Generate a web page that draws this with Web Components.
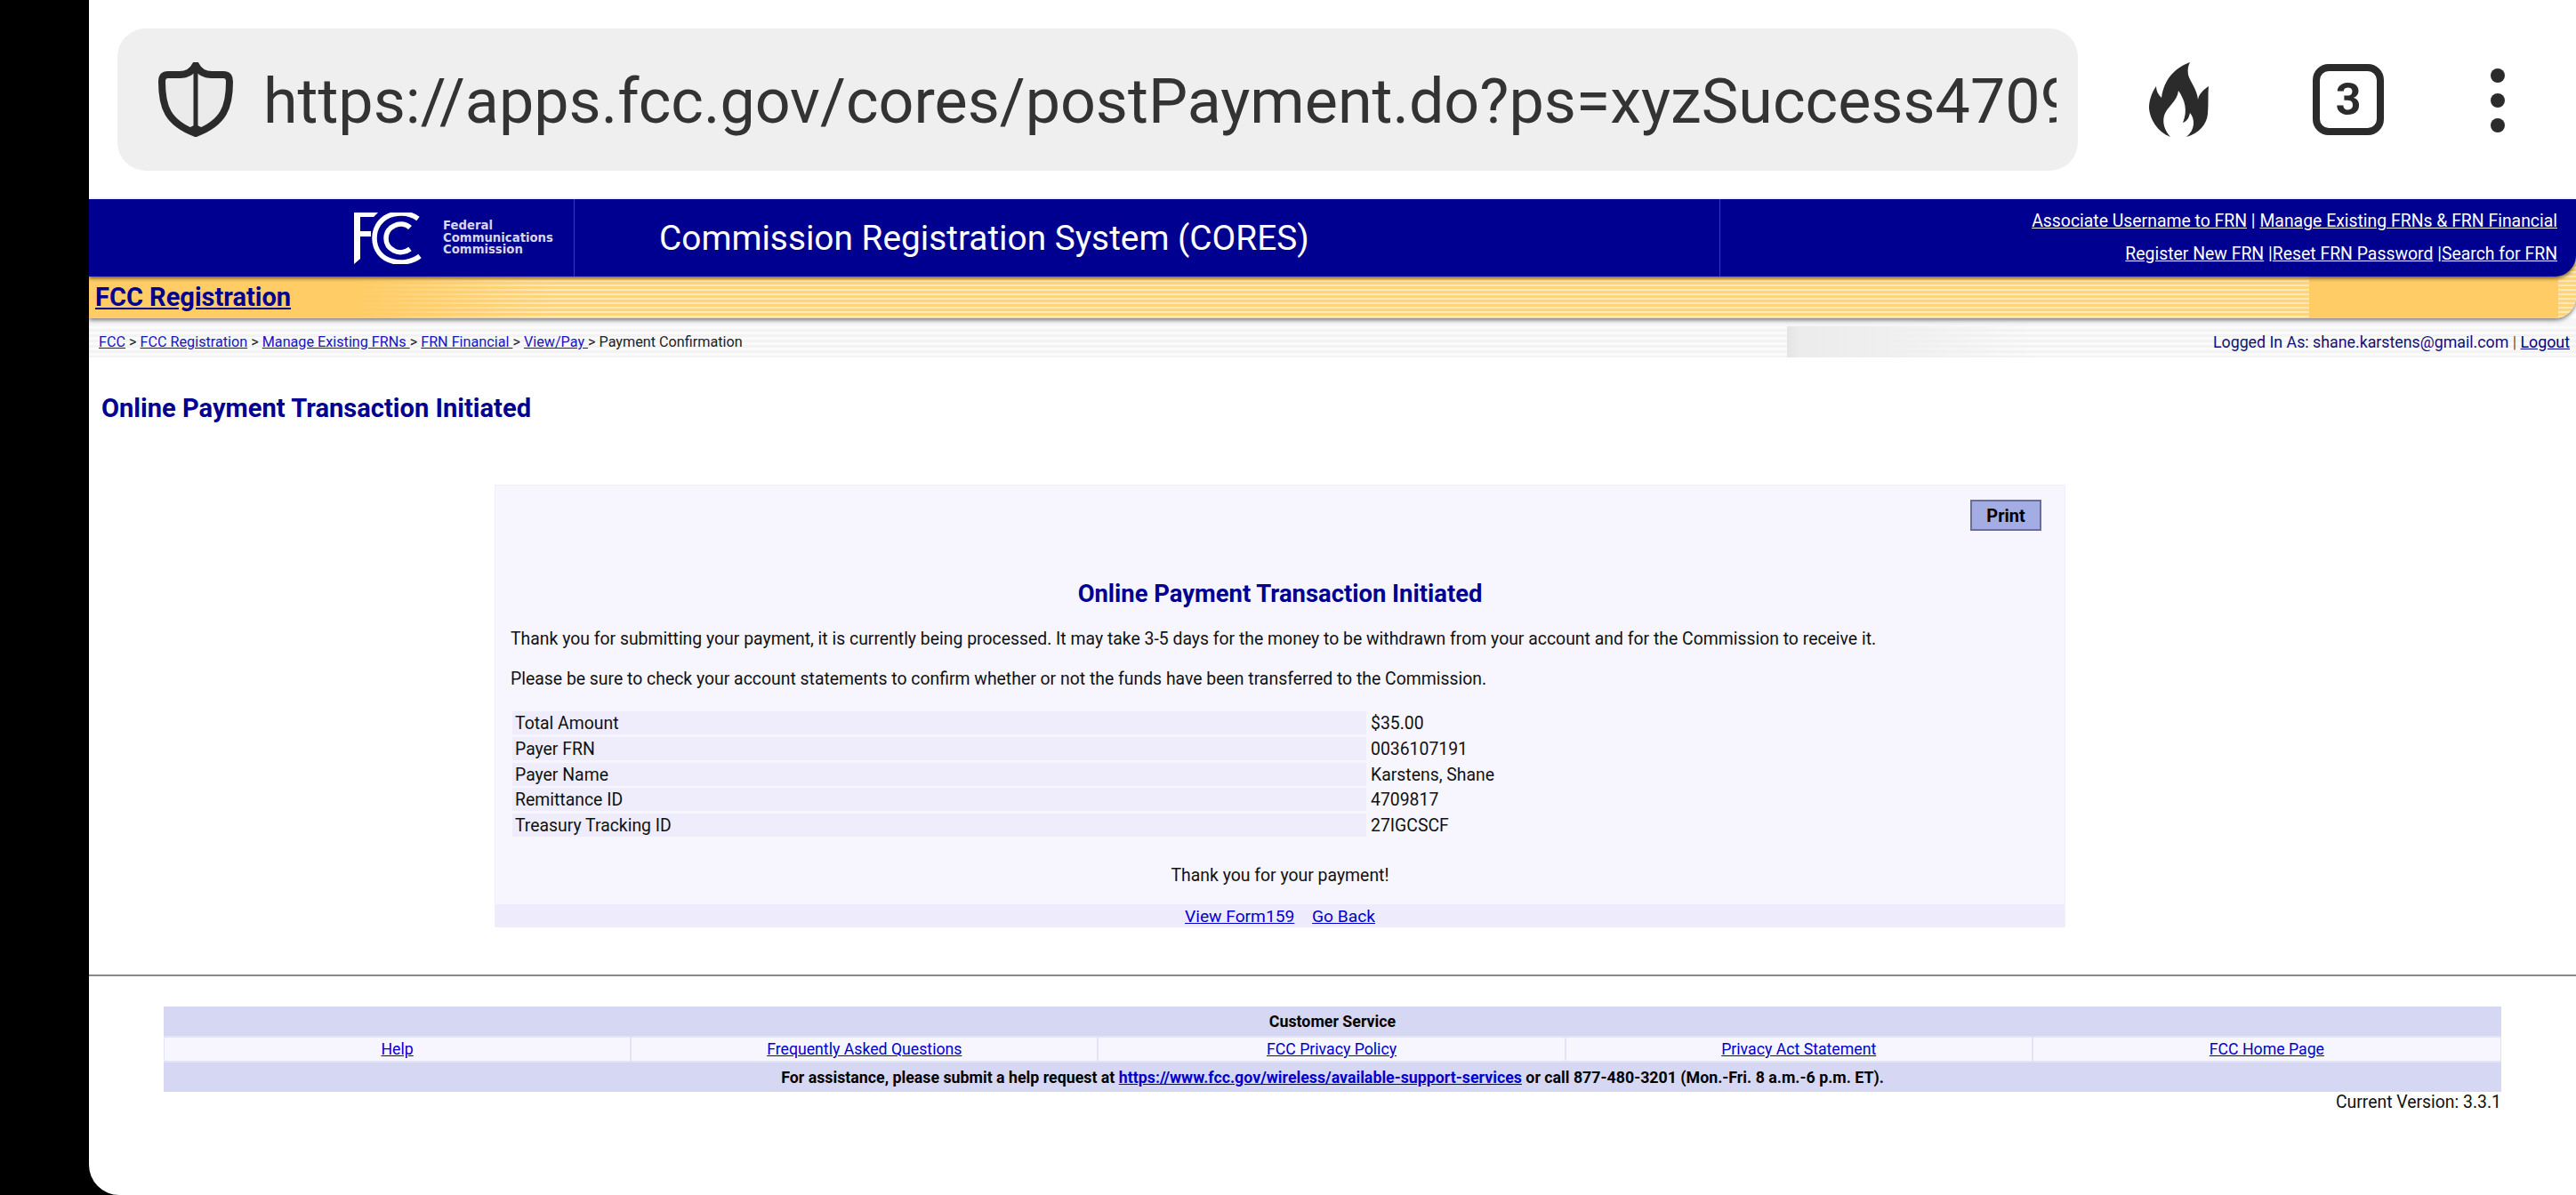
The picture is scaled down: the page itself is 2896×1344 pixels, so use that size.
<!DOCTYPE html>
<html>
<head>
<meta charset="utf-8">
<title>Commission Registration System (CORES)</title>
<style>
  html, body { margin: 0; height: 100%; background: #000; }
  body { padding-left: 100px; box-sizing: border-box; font-family: Roboto, "Liberation Sans", sans-serif; overflow: hidden; }
  #page { display: block; height: 1344px; background: #fff; border-bottom-left-radius: 34px; overflow: hidden; }
</style>
</head>
<body>
<div id="page">
  <browser-bar url="https://apps.fcc.gov/cores/postPayment.do?ps=xyzSuccess4709817" tabs="3"></browser-bar>
  <cores-header title-text="Commission Registration System (CORES)">
    <a href="#">Associate Username to FRN</a> | <a href="#">Manage Existing FRNs &amp; FRN Financial</a><br>
    <a href="#">Register New FRN</a> |<a href="#">Reset FRN Password</a> |<a href="#">Search for FRN</a>
  </cores-header>
  <gold-bar label="FCC Registration"></gold-bar>
  <crumb-bar user="shane.karstens@gmail.com"></crumb-bar>
  <payment-card heading="Online Payment Transaction Initiated">
    <p>Thank you for submitting your payment, it is currently being processed. It may take 3-5 days for the money to be withdrawn from your account and for the Commission to receive it.</p>
    <p>Please be sure to check your account statements to confirm whether or not the funds have been transferred to the Commission.</p>
    <info-row slot="rows" label="Total Amount">$35.00</info-row>
    <info-row slot="rows" label="Payer FRN">0036107191</info-row>
    <info-row slot="rows" label="Payer Name">Karstens, Shane</info-row>
    <info-row slot="rows" label="Remittance ID">4709817</info-row>
    <info-row slot="rows" label="Treasury Tracking ID">27IGCSCF</info-row>
  </payment-card>
  <service-footer version="3.3.1"></service-footer>
</div>

<script>
// 顶部浏览器地址栏
class BrowserBar extends HTMLElement {
  constructor() {
    super();
    this.attachShadow({ mode: 'open' });
    this.shadowRoot.innerHTML = `
      <style>
        :host { display: flex; align-items: center; height: 224px; box-sizing: border-box; padding: 32px 0 32px 32px; color: #2b2b2b; }
        .pill { width: 2204px; height: 160px; box-sizing: border-box; flex: none; display: flex; align-items: center; background: #efefef; border-radius: 32px; padding-left: 46px; }
        .url { width: 2016px; margin-left: 34px; padding-top: 4px; overflow: hidden; white-space: nowrap; font-size: 70px; line-height: 100px; color: #333; }
        svg { display: block; flex: none; }
        .fire { margin-left: 80px; }
        .tabs { margin-left: 116px; width: 80px; height: 80px; box-sizing: border-box; flex: none; border: 8px solid #2b2b2b; border-radius: 18px; display: flex; align-items: center; justify-content: center; font: 700 50px Roboto, sans-serif; }
        .dots { margin-left: 120px; display: flex; flex-direction: column; gap: 12px; padding-top: 1px; }
        .dots i { display: block; width: 16px; height: 16px; border-radius: 50%; background: #2b2b2b; }
      </style>
      <div class="pill">
        <svg width="84" height="84" viewBox="0 0 84 84"><path d="M42 3C38 11 32 14 24 14H11C6 14 4 17 4 22C4 50 10 68 42 80C74 68 80 50 80 22C80 17 78 14 73 14H60C52 14 46 11 42 3Z" fill="#ebebeb" stroke="#2b2b2b" stroke-width="8" stroke-linejoin="round"/><path d="M42 4V80" stroke="#2b2b2b" stroke-width="5"/><path d="M30 76L42 84L54 76L42 70Z" fill="#2b2b2b"/></svg>
        <div class="url">${this.getAttribute('url')}</div>
      </div>
      <svg class="fire" width="68" height="84" viewBox="0 0 68 84"><path fill="#2b2b2b" d="M46 0C30 6 17 18 14 40C10 36 8 32 8 27C2 36 0 44 0 52C1 64 9 78 24 84C17 76 15 68 17 60C20 50 32 44 33 32C40 42 44 54 38 68C43 66 45 62 46 57C52 64 52 76 42 84C56 80 65 70 66 58C67 46 66 36 67 27C60 32 56 36 55 42C54 30 46 22 44 14C43 8 44 4 46 0Z"/></svg>
      <div class="tabs">${this.getAttribute('tabs')}</div>
      <div class="dots"><i></i><i></i><i></i></div>`;
  }
}

// 蓝色页眉
class CoresHeader extends HTMLElement {
  constructor() {
    super();
    this.attachShadow({ mode: 'open' });
    this.shadowRoot.innerHTML = `
      <style>
        :host { display: flex; position: relative; z-index: 2; height: 87px; background: #000090; color: #fff; border-bottom-right-radius: 24px; box-shadow: 0 2px 4px rgba(70,50,0,.75); }
        .logo { width: 546px; box-sizing: border-box; flex: none; border-right: 1px solid #3a3ab0; display: flex; align-items: center; padding-left: 298px; }
        .logo svg { display: block; flex: none; }
        .seal { margin-left: 24px; font: 700 13.25px/13.5px "DejaVu Sans", sans-serif; color: #d6d6ee; }
        h1 { flex: none; width: 1288px; box-sizing: border-box; margin: 0; padding-left: 95px; border-right: 1px solid #3a3ab0; font: 400 38.8px/87px Roboto, sans-serif; white-space: nowrap; }
        .links { flex: 1; text-align: right; padding: 6px 21px 0 0; font-size: 19.4px; line-height: 37px; white-space: nowrap; }
        ::slotted(a) { color: #fff; }
      </style>
      <div class="logo">
        <svg width="76" height="58" viewBox="0 0 76 58">
          <path fill="#fff" d="M0 0H27L22 5H7V21H19V27H7V52L0 58Z"/>
          <path fill="none" stroke="#fff" stroke-width="5.5" d="M72 7C64 1 53 0 44 2C31 5 23 16 23 29C23 42 31 52 44 55C53 57 65 56 74 49"/>
          <path fill="none" stroke="#fff" stroke-width="5.5" d="M63 17C58 12 50 12 45 15C39 18 36 23 36 29C36 35 39 40 45 43C50 46 58 45 63 41"/>
        </svg>
        <div class="seal">Federal<br>Communications<br>Commission</div>
      </div>
      <h1>${this.getAttribute('title-text')}</h1>
      <div class="links"><slot></slot></div>`;
  }
}

// 金色条纹栏
class GoldBar extends HTMLElement {
  constructor() {
    super();
    this.attachShadow({ mode: 'open' });
    this.shadowRoot.innerHTML = `
      <style>
        :host { display: block; position: relative; z-index: 1; margin-top: -24px; height: 71px; box-sizing: border-box; padding: 24px 0 0 7px; border-bottom-right-radius: 24px; box-shadow: 0 2px 5px rgba(60,60,60,.7);
          background:
            linear-gradient(90deg, #ffcc66 0, #ffcc66 300px, rgba(255,204,102,0) 520px) 0 0 no-repeat,
            linear-gradient(#ffcc66, #ffcc66) 2496px 0 / 280px 100% no-repeat,
            repeating-linear-gradient(180deg, #ffd47a 0, #ffd47a 3px, #ffe9b8 3px, #ffe9b8 5px);
        }
        a { font: 700 29px/46px Roboto, sans-serif; color: #000090; }
      </style>
      <a href="#">${this.getAttribute('label')}</a>`;
  }
}

// 面包屑导航
class CrumbBar extends HTMLElement {
  constructor() {
    super();
    this.attachShadow({ mode: 'open' });
    this.shadowRoot.innerHTML = `
      <style>
        :host { display: flex; justify-content: space-between; align-items: center; height: 44px; box-sizing: border-box; padding: 9px 7px 0 11px; font-size: 16.2px; color: #222; white-space: nowrap;
          background:
            linear-gradient(90deg, #e4e4e4 0, #ececec 14px, #efefef 110px, rgba(239,239,239,0) 280px) 1909px 9px / 300px 35px no-repeat,
            linear-gradient(#f7f7f7, #f7f7f7) 0 0 / 100% 9px no-repeat,
            repeating-linear-gradient(180deg, #f3f3f3 0, #f3f3f3 3px, #fbfbfb 3px, #fbfbfb 6px);
        }
        a { color: #1515c4; }
        .user { color: #10107a; font-size: 17.8px; }
        .user a { color: #000090; }
        .sep { color: #555; }
      </style>
      <div><a href="#">FCC</a> &gt; <a href="#">FCC Registration</a> &gt; <a href="#">Manage Existing FRNs </a>&gt; <a href="#">FRN Financial </a>&gt; <a href="#">View/Pay </a>&gt; Payment Confirmation</div>
      <div class="user">Logged In As: ${this.getAttribute('user')} <span class="sep">|</span> <a href="#">Logout</a></div>`;
  }
}

// 一行付款信息
class InfoRow extends HTMLElement {
  constructor() {
    super();
    this.attachShadow({ mode: 'open' });
    this.shadowRoot.innerHTML = `
      <style>
        :host { display: grid; grid-template-columns: 960px 1fr; height: 26px; font-size: 19.4px; line-height: 28px; color: #111; }
        .label { background: #efedfc; padding-left: 3px; height: 26px; }
        .value { padding-left: 5px; height: 26px; }
      </style>
      <div class="label">${this.getAttribute('label')}</div>
      <div class="value"><slot></slot></div>`;
  }
}

// 付款确认卡片
class PaymentCard extends HTMLElement {
  constructor() {
    super();
    this.attachShadow({ mode: 'open' });
    const heading = this.getAttribute('heading');
    this.shadowRoot.innerHTML = `
      <style>
        :host { display: block; }
        .page-title { margin: 0; padding: 40px 0 0 14px; font: 700 29.1px/34px Roboto, sans-serif; color: #000090; }
        .card { margin: 69px 0 53px 456px; width: 1766px; height: 498px; box-sizing: border-box; background: #f7f6ff; border: 1px solid #f0effa; border-bottom: 0; display: flex; flex-direction: column; }
        .top { display: flex; justify-content: flex-end; padding: 16px 26px 0 0; }
        button { width: 80px; height: 35px; padding: 0; background: #a4ace4; border: 2px solid #6a7094; font: 700 20px Roboto, sans-serif; color: #000; }
        h2 { margin: 54px 0 0; text-align: center; font: 700 27.4px/34px Roboto, sans-serif; color: #000090; }
        .text { padding: 2px 0 0 17px; font-size: 19.4px; line-height: 26px; color: #111; }
        ::slotted(p) { margin: 19px 0 0 !important; }
        .rows { display: flex; flex-direction: column; gap: 2.75px; margin: 23px 0 0 19px; }
        .thanks { margin-top: 31px; text-align: center; font-size: 19.4px; line-height: 26px; color: #111; }
        .links { margin-top: auto; height: 26px; background: #eeecfc; text-align: center; font-size: 19.2px; line-height: 27px; }
        .links a { color: #0000cc; }
        .links a + a { margin-left: 15px; }
      </style>
      <h1 class="page-title">${heading}</h1>
      <div class="card">
        <div class="top"><button>Print</button></div>
        <h2>${heading}</h2>
        <div class="text"><slot></slot></div>
        <div class="rows"><slot name="rows"></slot></div>
        <div class="thanks">Thank you for your payment!</div>
        <div class="links"><a href="#">View Form159</a> <a href="#">Go Back</a></div>
      </div>`;
  }
}

// 页脚客户服务表格
class ServiceFooter extends HTMLElement {
  constructor() {
    super();
    this.attachShadow({ mode: 'open' });
    const items = ['Help', 'Frequently Asked Questions', 'FCC Privacy Policy', 'Privacy Act Statement', 'FCC Home Page'];
    this.shadowRoot.innerHTML = `
      <style>
        :host { display: block; border-top: 2px solid #888; padding: 34px 84px 0 84px; font-size: 17.7px; color: #000; }
        .band { height: 33px; background: #d6d8f3; text-align: center; font-weight: 700; font-size: 17.8px; line-height: 33px; white-space: nowrap; }
        .cols { display: grid; grid-template-columns: repeat(5, 1fr); height: 30px; background: #d6d8f3; border: 2px solid #e2e3f6; border-width: 2px 1px; box-sizing: border-box; }
        .cols div { background: #f7f6ff; text-align: center; line-height: 26px; border-right: 2px solid #e2e3f6; }
        .cols div:last-child { border-right: 0; }
        a { color: #0000cc; }
        .version { text-align: right; font-size: 19.4px; line-height: 24px; color: #111; }
      </style>
      <div class="band">Customer Service</div>
      <div class="cols">${items.map(item => `<div><a href="#">${item}</a></div>`).join('')}</div>
      <div class="band">For assistance, please submit a help request at <a href="#">https://www.fcc.gov/wireless/available-support-services</a> or call 877-480-3201 (Mon.-Fri. 8 a.m.-6 p.m. ET).</div>
      <div class="version">Current Version: ${this.getAttribute('version')}</div>`;
  }
}

customElements.define('browser-bar', BrowserBar);
customElements.define('cores-header', CoresHeader);
customElements.define('gold-bar', GoldBar);
customElements.define('crumb-bar', CrumbBar);
customElements.define('info-row', InfoRow);
customElements.define('payment-card', PaymentCard);
customElements.define('service-footer', ServiceFooter);
</script>
</body>
</html>
